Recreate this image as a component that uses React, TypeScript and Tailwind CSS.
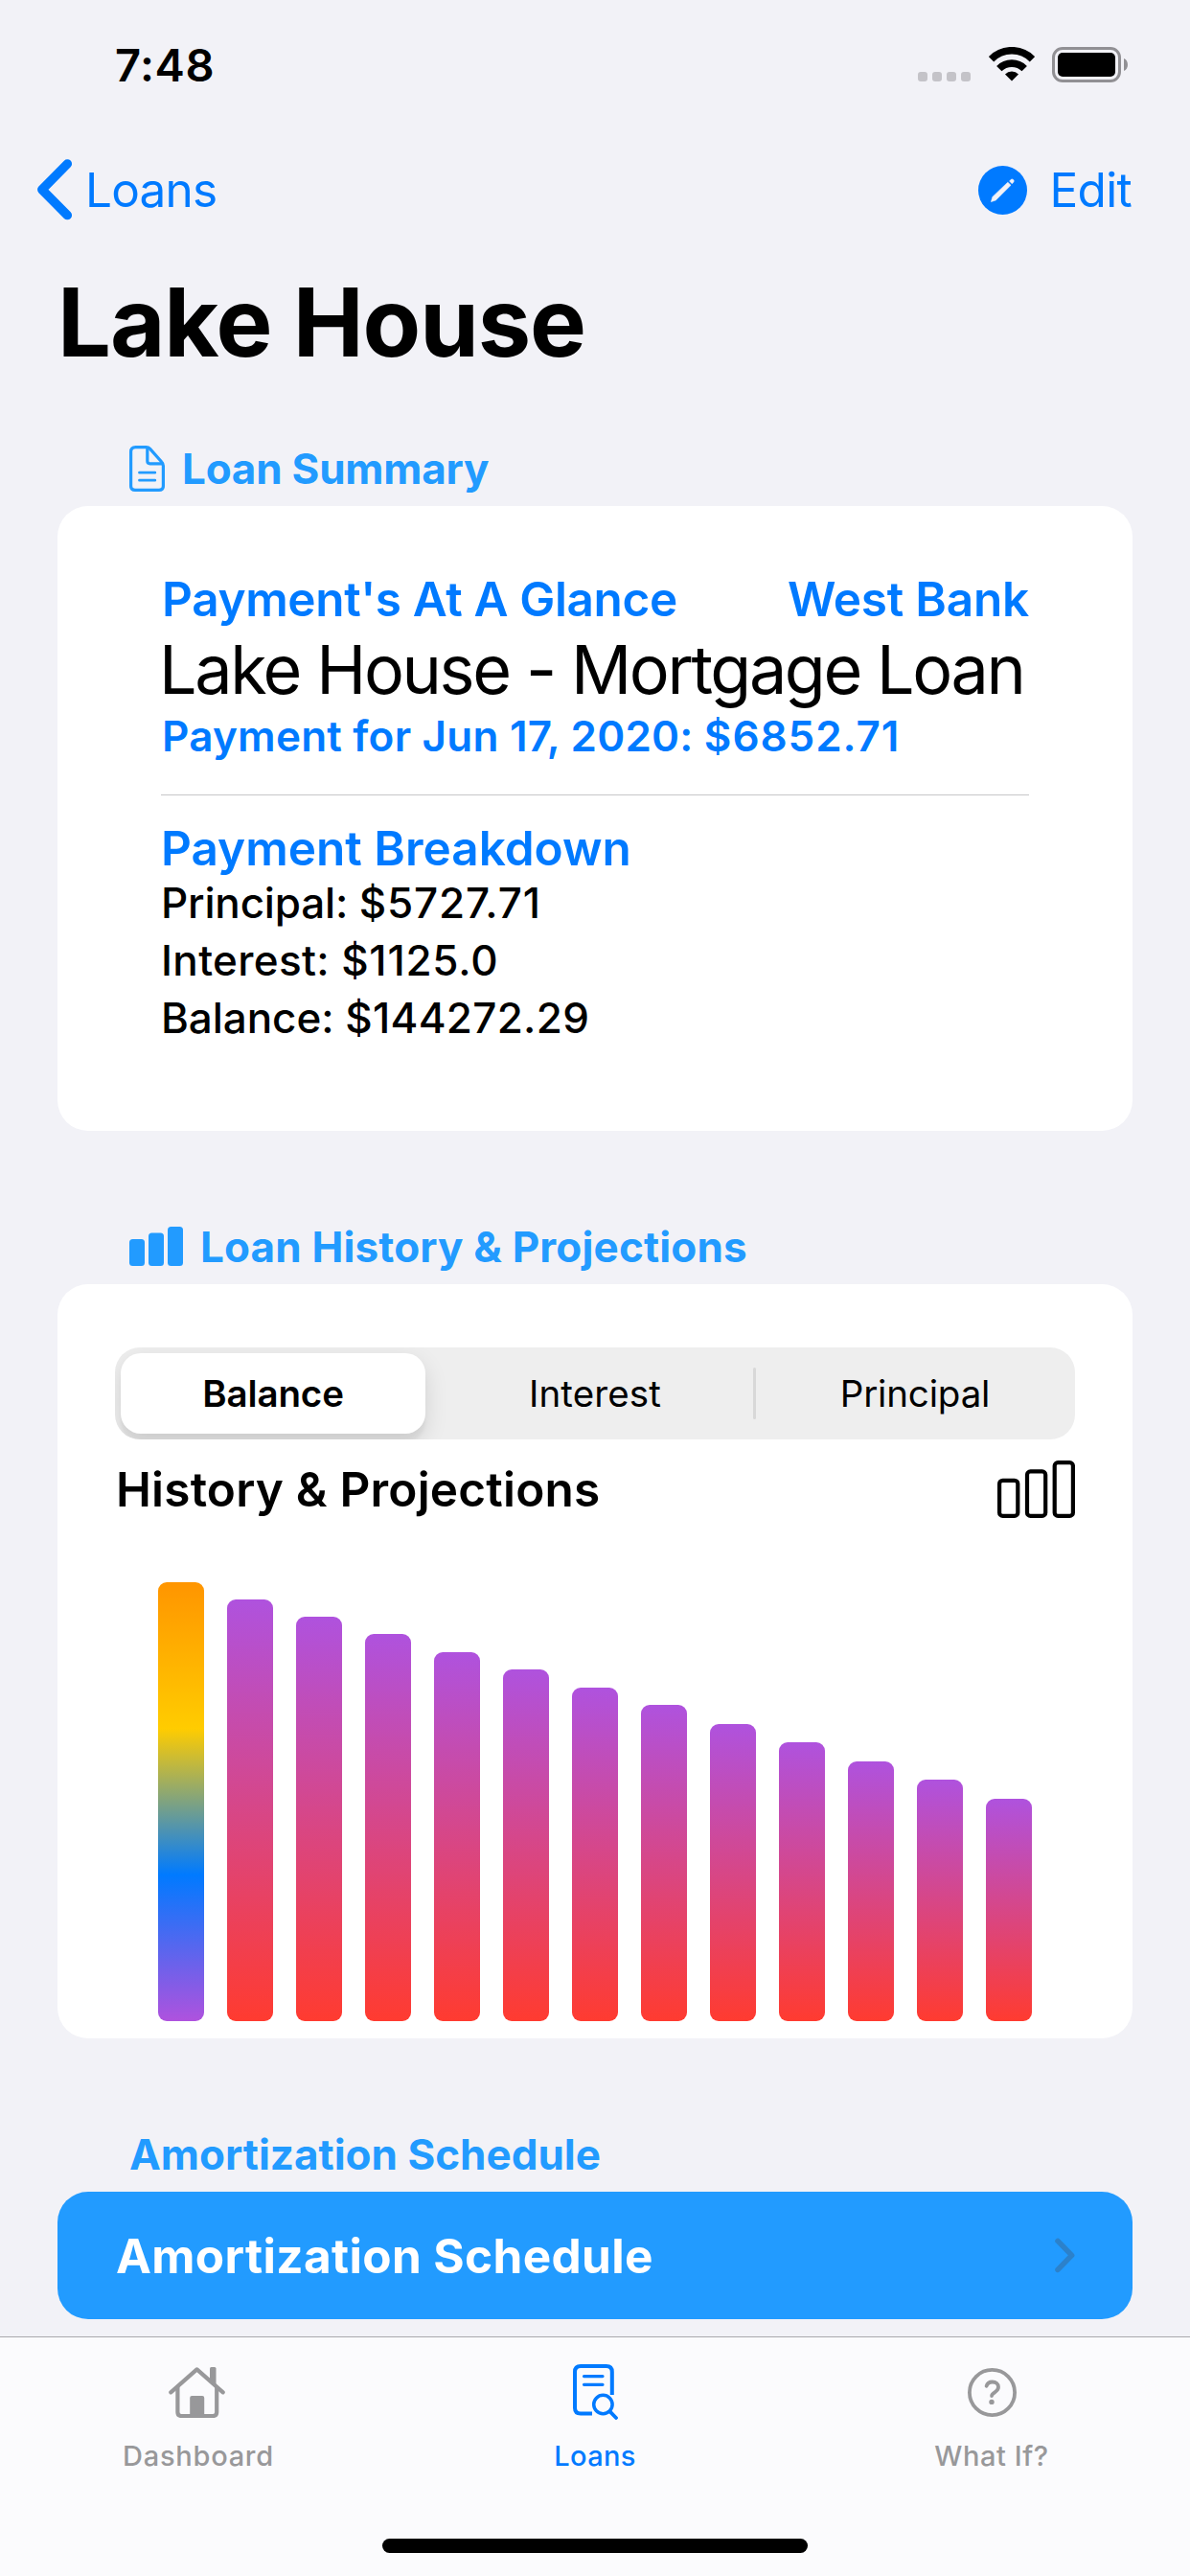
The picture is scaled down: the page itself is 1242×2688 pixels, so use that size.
import React from "react";

const HISTORY = [458, 440, 422, 404, 385, 367, 348, 330, 310, 291, 271, 252, 232];

function StatusBar() {
  return (
    <div className="flex h-[136px] shrink-0 items-center justify-between pr-[65px] pl-[120px]">
      <span className="-mt-[2px] text-[47px] leading-none font-semibold tracking-[0.012em] text-black">7:48</span>
      <div className="flex items-center">
        <div className="mt-[24px] mr-[19px] flex gap-[5px]">
          {[0, 1, 2, 3].map((i) => (
            <span key={i} className="size-[10px] rounded-[3px] bg-[#c4c3c8]" />
          ))}
        </div>
        <svg width="48" height="36" viewBox="0 0 48 36" className="mr-[18px] -mt-[2px]" fill="none" stroke="black" strokeWidth="7.6">
          <path d="M2.5 12.8A30 30 0 0 1 45.5 12.8" />
          <path d="M10.8 22.6A18.6 18.6 0 0 1 37.2 22.6" />
          <path d="M17 28.4A10 10 0 0 1 31 28.4L24 35.6Z" fill="black" stroke="none" />
        </svg>
        <svg width="79" height="37" viewBox="0 0 79 37" className="-mt-px">
          <rect x="1.5" y="1.5" width="69" height="34" rx="9.5" fill="none" stroke="#919094" strokeWidth="3" />
          <rect x="6" y="6" width="60" height="25" rx="5" fill="black" />
          <path d="M75 12C80.3 14 80.3 23 75 25Z" fill="#919094" />
        </svg>
      </div>
    </div>
  );
}

function NavBar() {
  return (
    <div className="flex h-[124px] shrink-0 items-center justify-between pr-[61px] pl-[38px] text-[49.5px] leading-none text-[#007aff]">
      <div className="flex items-center">
        <svg width="38" height="64" viewBox="0 0 38 64" fill="none" stroke="currentColor" strokeWidth="9.5" strokeLinecap="round" strokeLinejoin="round" className="mr-[13px]">
          <path d="M32.3 5L5.8 31.8L32.3 58.6" />
        </svg>
        <span className="mt-px tracking-[-0.016em]">Loans</span>
      </div>
      <div className="mt-[2px] flex items-center">
        <svg width="51" height="51" viewBox="0 0 51 51" className="mr-[24px] -mt-px">
          <circle cx="25.5" cy="25.5" r="25.5" fill="currentColor" />
          <path d="M13.4 37.6L14.9 32.4L30.8 17.2L34 20.3L18.3 35.9Z" fill="#f2f2f7" stroke="#f2f2f7" strokeWidth="0.6" strokeLinejoin="round" />
          <path d="M32.6 16L34.2 14.3Q35.3 13.4 36.6 14.6Q37.8 15.9 36.8 17L35.2 18.7Z" fill="#f2f2f7" stroke="#f2f2f7" strokeWidth="0.6" />
        </svg>
        <span className="tracking-[-0.014em]">Edit</span>
      </div>
    </div>
  );
}

function SectionHeader({ icon, title, className }: { icon?: React.ReactNode; title: string; className: string }) {
  return (
    <div className={`flex shrink-0 items-center pl-[135px] text-[44px] leading-[78px] font-bold text-[#229bff] ${className}`}>
      {icon}
      <h2>{title}</h2>
    </div>
  );
}

function DocIcon() {
  return (
    <svg width="37" height="48" viewBox="0 0 37 48" fill="none" stroke="currentColor" strokeWidth="3.2" strokeLinecap="round" strokeLinejoin="round" className="mr-[18px]">
      <path d="M6.5 1.6H17.5Q20 1.6 21.6 3.4L33.7 17Q35.4 18.8 35.4 21V42Q35.4 46.4 31 46.4H6Q1.6 46.4 1.6 42V6.5Q1.6 1.6 6.5 1.6Z" />
      <path d="M18.8 2.5V16Q18.8 18.8 21.6 18.8H34.5" />
      <path d="M10.5 28.2H26.8M10.5 36.2H26.8" strokeWidth="2.8" />
    </svg>
  );
}

function BarsIcon() {
  return (
    <svg width="56" height="41" viewBox="0 0 56 41" fill="currentColor" className="-mt-px mr-[18px]">
      <rect x="0" y="13" width="16" height="28" rx="3.5" />
      <rect x="20" y="6.5" width="16" height="34.5" rx="3.5" />
      <rect x="40" y="0" width="16" height="41" rx="3.5" />
    </svg>
  );
}

function SummaryCard() {
  return (
    <section className="mx-[60px] flex h-[652px] shrink-0 flex-col rounded-[32px] bg-white px-[108px] pt-[67px]">
      <div className="flex h-[60px] items-center justify-between text-[49.5px] leading-none font-semibold text-[#007aff]">
        <span className="mt-px ml-px tracking-[-0.0072em]">Payment's At A Glance</span>
        <span className="mt-px tracking-[-0.0044em]">West Bank</span>
      </div>
      <p className="-ml-[2px] h-[87px] text-[70px] leading-[87px] tracking-[-0.034em] whitespace-nowrap text-black">Lake House - Mortgage Loan</p>
      <p className="ml-px h-[52px] text-[44px] leading-[52px] font-semibold tracking-[0.005em] whitespace-nowrap text-[#007aff]">
        Payment for Jun 17, 2020: <span className="tracking-[0.0213em]">$6852.71</span>
      </p>
      <div className="mt-[35px] h-px bg-[#c6c6c8]" />
      <p className="mt-[29px] h-[53px] text-[49.5px] leading-[53px] font-semibold text-[#007aff]">Payment Breakdown</p>
      <div className="text-[44px] leading-[60px] font-medium text-black">
        <p className="tracking-[-0.004em]">
          Principal: <span className="tracking-[0.0189em]">$5727.71</span>
        </p>
        <p className="tracking-[0.008em]">
          Interest: <span className="tracking-[0.0178em]">$1125.0</span>
        </p>
        <p className="tracking-[-0.0015em]">
          Balance: <span className="tracking-[0.0069em]">$144272.29</span>
        </p>
      </div>
    </section>
  );
}

function Segmented() {
  return (
    <div className="grid h-[96px] grid-cols-3 overflow-hidden rounded-[26px] bg-[#eeeeee] text-center text-[38.5px] leading-[96px] text-black">
      <div className="p-[6px] pr-[10px]">
        <div className="h-[84px] rounded-[21px] bg-white leading-[84px] font-semibold shadow-[0_9px_24px_rgba(0,0,0,0.12),0_9px_3px_rgba(0,0,0,0.04)] tracking-[-0.003em]">Balance</div>
      </div>
      <div className="tracking-[0.004em]">Interest</div>
      <div className="relative tracking-[-0.004em]">
        Principal
        <span className="absolute top-[21px] -left-[2px] h-[54px] w-[3px] rounded-full bg-[#d8d8d8]" />
      </div>
    </div>
  );
}

function HistoryCard() {
  return (
    <section className="mx-[60px] flex h-[787px] shrink-0 flex-col rounded-[32px] bg-white px-[60px] pt-[66px]">
      <Segmented />
      <div className="flex h-[104px] items-center justify-between">
        <h3 className="mt-[2px] ml-px text-[49.5px] leading-none font-semibold tracking-[0.004em] text-black">History &amp; Projections</h3>
        <svg width="81" height="60" viewBox="0 0 81 60" fill="none" stroke="black" strokeWidth="4.2">
          <rect x="2.1" y="20.8" width="19.2" height="37.1" rx="3.5" />
          <rect x="31" y="11.4" width="19.2" height="46.5" rx="3.5" />
          <rect x="59.7" y="2.1" width="19.2" height="55.8" rx="3.5" />
        </svg>
      </div>
      <div className="mt-[45px] flex h-[458px] items-end gap-[24px] pl-[45px]">
        {HISTORY.map((height, i) => (
          <div
            key={i}
            style={{ height }}
            className={
              i === 0
                ? "w-[48px] rounded-[9px] bg-[linear-gradient(to_bottom,#ff9500,#ffcc00_33.33%,#007aff_66.67%,#af52de)]"
                : "w-[48px] rounded-[9px] bg-[linear-gradient(to_bottom,#af52de,#ff3b30)]"
            }
          />
        ))}
      </div>
    </section>
  );
}

function ScheduleRow() {
  return (
    <button className="mx-[60px] flex h-[133px] shrink-0 items-center justify-between rounded-[32px] bg-[#229bff] px-[60px] text-left">
      <span className="mt-[2px] ml-px text-[49.5px] leading-none font-bold tracking-[0.0071em] text-white">Amortization Schedule</span>
      <svg width="21" height="37" viewBox="0 0 21 37" fill="none" stroke="#2c81ca" strokeWidth="5.6" strokeLinecap="round" strokeLinejoin="round">
        <path d="M3 3.4L17.6 18.4L3 33.4" />
      </svg>
    </button>
  );
}

function HouseIcon() {
  return (
    <svg width="59" height="53" viewBox="0 0 59 53" fill="none" stroke="currentColor" strokeWidth="4.2" strokeLinecap="round" strokeLinejoin="round" className="mr-[3px]">
      <path d="M2.3 26.3L29.5 2.4L56.7 26.3" />
      <path d="M9.4 21V47Q9.4 51 13.4 51H46.2Q50.2 51 50.2 47V21" strokeLinecap="butt" />
      <path d="M43 15V1.5Q43 0 44.5 0H48Q49.5 0 49.5 1.5V21Z" fill="currentColor" stroke="none" />
      <path d="M22.2 51V32Q22.2 30 24.2 30H35.2Q37.2 30 37.2 32V51Z" fill="currentColor" stroke="none" />
    </svg>
  );
}

function LoansIcon() {
  return (
    <svg width="47" height="58" viewBox="0 0 47 58" fill="none" stroke="currentColor" strokeWidth="4">
      <path d="M40.8 32V8Q40.8 2 34.8 2H8Q2 2 2 8V45.4Q2 51.4 8 51.4H20" />
      <path d="M11.5 12.6H31M11.5 21.3H31" strokeWidth="3.2" strokeLinecap="round" />
      <circle cx="31.4" cy="42" r="9.7" strokeWidth="3.5" />
      <path d="M38.6 49.4L45 56" strokeLinecap="round" strokeWidth="3.8" />
    </svg>
  );
}

function QuestionIcon() {
  return (
    <svg width="51" height="51" viewBox="0 0 51 51" fill="none" stroke="currentColor" strokeWidth="3.8">
      <circle cx="25.5" cy="25.5" r="23.6" />
      <path d="M19.6 18.8C20.4 15.8 22.8 14.5 25.8 14.5C29.4 14.5 32 16.5 32 19.8C32 22.4 30.4 23.8 28.4 25.2C26.2 26.6 25.2 27.2 25.1 29" strokeLinecap="round" strokeLinejoin="round" />
      <circle cx="25" cy="35.4" r="2.7" fill="currentColor" stroke="none" />
    </svg>
  );
}

function TabBar() {
  const tabs = [
    { label: "Dashboard", icon: <HouseIcon />, className: "text-[#98989a] tracking-[0.046em]" },
    { label: "Loans", icon: <LoansIcon />, className: "text-[#007aff] tracking-[0.022em]" },
    { label: "What If?", icon: <QuestionIcon />, className: "text-[#98989a] tracking-[0.037em]" },
  ];
  return (
    <nav className="flex h-[250px] shrink-0 flex-col justify-between border-t border-[#a9a9ad] bg-[#fbfbfd] pb-[24px]">
      <div className="grid grid-cols-3 pt-[28px]">
        {tabs.map((tab) => (
          <div key={tab.label} className={`flex flex-col items-center ${tab.className}`}>
            <div className="flex h-[58px] items-center">{tab.icon}</div>
            <span className="mt-[18px] text-[29px] leading-[40px] font-medium">{tab.label}</span>
          </div>
        ))}
      </div>
      <div className="h-[15px] w-[444px] self-center rounded-full bg-black" />
    </nav>
  );
}

export default function App() {
  return (
    <div className="flex h-[2688px] w-[1242px] flex-col overflow-hidden bg-[#f2f2f7] font-['Inter',sans-serif] antialiased">
      <StatusBar />
      <NavBar />
      <h1 className="h-[152px] shrink-0 pl-[60px] text-[99px] leading-[152px] font-bold tracking-[-0.011em] text-black">Lake House</h1>
      <SectionHeader icon={<DocIcon />} title="Loan Summary" className="h-[116px] pt-[38px] tracking-[-0.005em]" />
      <SummaryCard />
      <SectionHeader icon={<BarsIcon />} title="Loan History &amp; Projections" className="h-[160px] pt-[82px] tracking-[0.0036em]" />
      <HistoryCard />
      <SectionHeader title="Amortization Schedule" className="h-[160px] pt-[82px]" />
      <ScheduleRow />
      <div className="flex-1" />
      <TabBar />
    </div>
  );
}
